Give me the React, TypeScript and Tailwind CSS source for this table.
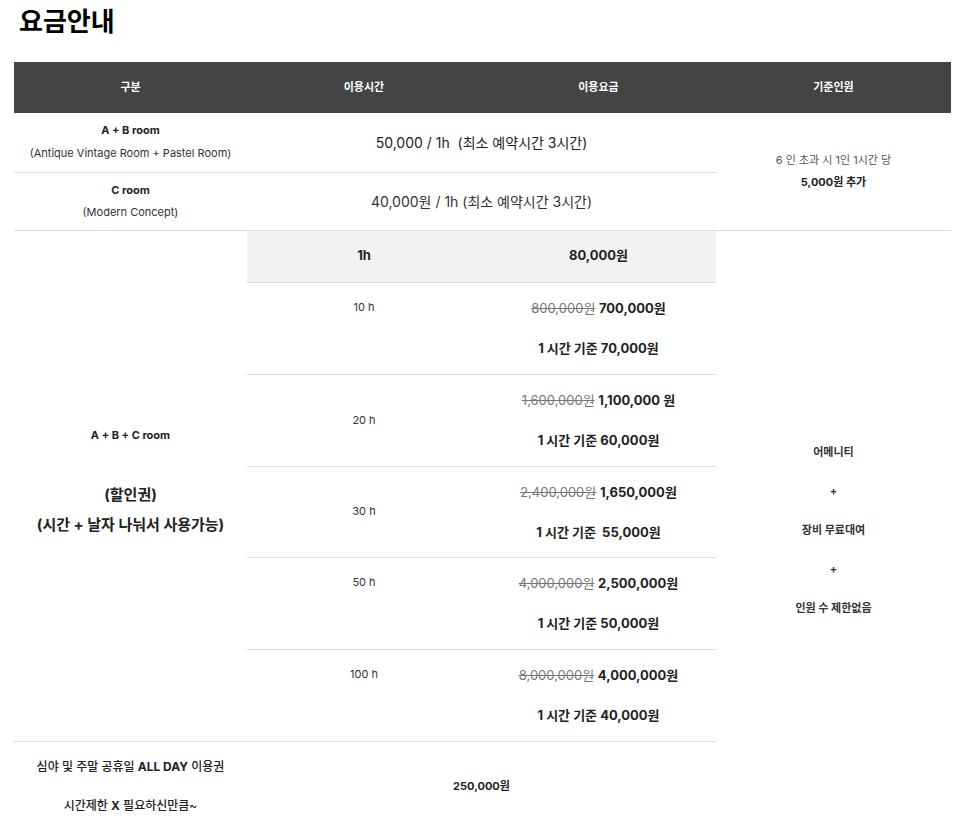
import React from 'react';

const font = { fontFamily: 'Inter, "Noto Sans CJK KR", sans-serif' };

interface Pack {
  hours: string;
  oldPrice: string;
  newPrice: string;
  perHour: string;
  top?: boolean;
  short?: boolean;
}

const packs: Pack[] = [
  { hours: '10 h', oldPrice: '800,000원', newPrice: '700,000원', perHour: '1 시간 기준 70,000원', top: true },
  { hours: '20 h', oldPrice: '1,600,000원', newPrice: '1,100,000 원', perHour: '1 시간 기준 60,000원' },
  { hours: '30 h', oldPrice: '2,400,000원', newPrice: '1,650,000원', perHour: '1 시간 기준  55,000원', short: true },
  { hours: '50 h', oldPrice: '4,000,000원', newPrice: '2,500,000원', perHour: '1 시간 기준 50,000원', top: true },
  { hours: '100 h', oldPrice: '8,000,000원', newPrice: '4,000,000원', perHour: '1 시간 기준 40,000원', top: true },
];

const line = 'border-b border-[#dddddd]';

export default function App() {
  return (
    <div className="bg-white min-h-[831px] text-[#333333]" style={font}>
      <h1 className="pl-[19px] pt-[6px] h-[62px] text-[26px] font-bold text-black leading-[32px]">요금안내</h1>

      <table className="ml-[14px] w-[937px] table-fixed border-collapse text-center">
        <thead>
          <tr className="h-[51px] bg-[#444444] text-white text-[11px] font-bold">
            <th className="w-[233px]">구분</th>
            <th className="w-[234px]">이용시간</th>
            <th className="w-[235px]">이용요금</th>
            <th className="w-[235px]">기준인원</th>
          </tr>
        </thead>
        <tbody>
          <tr className="h-[59px]">
            <td className={`${line} text-[11px] leading-[23px]`}>
              <div className="font-bold text-[#222222]">A + B room</div>
              <div>(Antique Vintage Room + Pastel Room)</div>
            </td>
            <td colSpan={2} className={`${line} text-[14px] text-[#222222]`}>
              50,000 / 1h &nbsp;(최소 예약시간 3시간)
            </td>
            <td rowSpan={2} className={`${line} text-[11px] leading-[22px]`}>
              <div className="text-[#555555]">6 인 초과 시 1인 1시간 당</div>
              <div className="font-bold text-[#222222]">5,000원 추가</div>
            </td>
          </tr>
          <tr className="h-[58px]">
            <td className={`${line} text-[11px] leading-[22px]`}>
              <div className="font-bold text-[#222222]">C room</div>
              <div>(Modern Concept)</div>
            </td>
            <td colSpan={2} className={`${line} text-[14px]`}>
              40,000원 / 1h (최소 예약시간 3시간)
            </td>
          </tr>

          <tr className="h-[52px]">
            <td rowSpan={6} className={`${line} pb-[12px] text-[#222222] font-bold`}>
              <div className="text-[11px] leading-[30px]">A + B + C room</div>
              <div className="h-[30px]" />
              <div className="text-[15px] leading-[30px]">(할인권)</div>
              <div className="text-[15px] leading-[30px]">(시간 + 날자 나눠서 사용가능)</div>
            </td>
            <td className={`${line} bg-[#f2f2f2] text-[13px] font-bold text-[#222222]`}>1h</td>
            <td className={`${line} bg-[#f2f2f2] text-[13px] font-bold text-[#222222]`}>80,000원</td>
            <td rowSpan={7} className="text-[11px] font-bold text-[#333333] leading-[39px]">
              <div>어메니티</div>
              <div>+</div>
              <div>장비 무료대여</div>
              <div>+</div>
              <div>인원 수 제한없음</div>
            </td>
          </tr>

          {packs.map(p => (
            <tr key={p.hours} className={p.short ? 'h-[91px]' : 'h-[92px]'}>
              <td className={`${line} text-[11px] ${p.top ? 'align-top pt-[16px]' : ''}`}>{p.hours}</td>
              <td className={`${line} text-[13px] leading-[40px]`}>
                <div>
                  <span className="line-through text-[#777777]">{p.oldPrice}</span>{' '}
                  <span className="font-bold text-[#222222]">{p.newPrice}</span>
                </div>
                <div className="font-bold text-[#222222] whitespace-pre">{p.perHour}</div>
              </td>
            </tr>
          ))}

          <tr className="h-[89px]">
            <td className="text-[12px] leading-[39px] font-medium text-[#222222]">
              <div>심야 및 주말 공휴일 <span className="font-bold">ALL DAY</span> 이용권</div>
              <div>시간제한 <span className="font-bold">X</span> 필요하신만큼~</div>
            </td>
            <td colSpan={2} className="text-[11px] font-bold text-[#222222]">250,000원</td>
          </tr>
        </tbody>
      </table>
    </div>
  );
}
